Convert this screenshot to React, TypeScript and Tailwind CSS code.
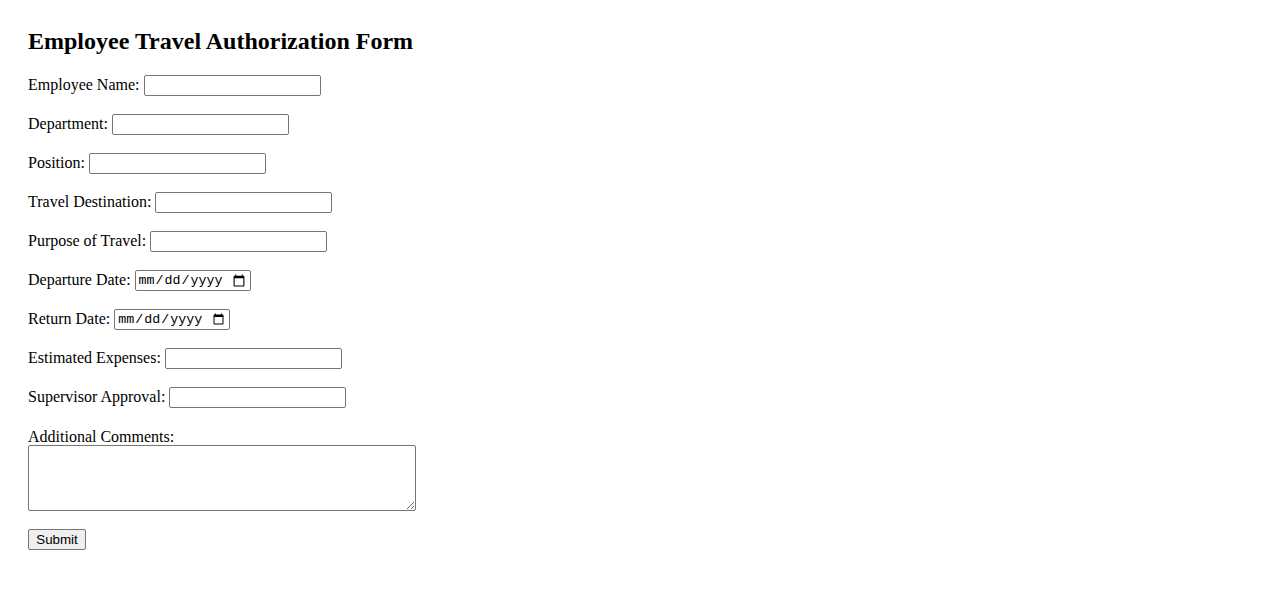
import { FormEvent } from "react";

const fields = [
  { id: "employeeName", label: "Employee Name:", type: "text" },
  { id: "department", label: "Department:", type: "text" },
  { id: "position", label: "Position:", type: "text" },
  { id: "destination", label: "Travel Destination:", type: "text" },
  { id: "purpose", label: "Purpose of Travel:", type: "text" },
  { id: "departureDate", label: "Departure Date:", type: "date" },
  { id: "returnDate", label: "Return Date:", type: "date" },
  { id: "expenses", label: "Estimated Expenses:", type: "text" },
  { id: "supervisor", label: "Supervisor Approval:", type: "text" },
];

export default function App() {
  const handleSubmit = (e: FormEvent<HTMLFormElement>) => {
    e.preventDefault();
  };

  return (
    <div className="min-h-screen bg-white px-[28px] pt-[28px] text-[16px] text-black font-['Liberation_Serif','Times_New_Roman',serif]">
      <h2 className="mb-[20px] text-[24px] leading-[27px] font-bold">
        Employee Travel Authorization Form
      </h2>
      <form onSubmit={handleSubmit}>
        {fields.map((f) => (
          <div key={f.id} className="mb-[18px] flex h-[21px] items-center gap-[4px]">
            <label htmlFor={f.id} className="pb-[2px]">
              {f.label}
            </label>
            {f.type === "date" ? (
              <input
                id={f.id}
                name={f.id}
                type="date"
                className="h-[21px] w-[116px] rounded-[2px] border border-[#767676] px-[2px] py-[1px] text-[13.33px] font-['Liberation_Mono',monospace]"
              />
            ) : (
              <input
                id={f.id}
                name={f.id}
                type="text"
                className="h-[21px] w-[177px] rounded-[2px] border border-[#767676] px-[2px] py-[1px] text-[13.33px] font-['Liberation_Sans',Arial,sans-serif]"
              />
            )}
          </div>
        ))}
        <div className="mb-[18px] pt-[1px]">
          <label htmlFor="comments" className="block h-[18px] leading-[20px]">
            Additional Comments:
          </label>
          <textarea
            id="comments"
            name="comments"
            className="block h-[66px] w-[388px] rounded-[2px] border border-[#767676] p-[2px] text-[13.33px] font-['Liberation_Mono',monospace]"
          />
        </div>
        <button
          type="submit"
          className="block h-[21px] w-[58px] rounded-[2px] border border-[#767676] bg-[#efefef] text-[13.33px] leading-[17px] font-['Liberation_Sans',Arial,sans-serif] hover:bg-[#e5e5e5]"
        >
          Submit
        </button>
      </form>
    </div>
  );
}
